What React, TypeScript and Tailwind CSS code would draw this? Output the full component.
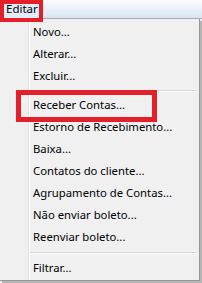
import React from "react";

const font = { fontFamily: '"Noto Sans", "Open Sans", "DejaVu Sans", sans-serif' };

function Item({ label }: { label: string }) {
  return (
    <div className="h-[22px] flex items-center pl-[33px] text-[11.3px] text-black leading-none">
      {label}
    </div>
  );
}

function Sep({ h }: { h: string }) {
  return (
    <div className={`${h} flex flex-col justify-center pl-[30px] pr-[3px]`}>
      <div className="h-px bg-[#d7d7d7]" />
      <div className="h-px bg-white" />
    </div>
  );
}

export default function App() {
  return (
    <div className="relative w-[202px] h-[283px] overflow-hidden bg-[#f0f0f0]" style={font}>
      {/* menu bar */}
      <div className="h-[19px] bg-gradient-to-b from-[#fbfcfe] to-[#dbe5f3] border-b border-[#a8acb2] flex items-end">
        <div className="h-[19px] px-[6px] flex items-center bg-[#e4ecf8] text-[11.5px] text-black leading-none">
          Editar
        </div>
      </div>

      {/* dropdown menu */}
      <div className="absolute left-0 top-[19px] w-[200px] h-[262px] bg-[#f0f0f0] border-r border-b border-[#979797] shadow-[2px_2px_1px_rgba(0,0,0,0.25)]">
        <div className="absolute left-[28px] top-0 bottom-0 w-px bg-[#e2e3e3]" />
        <div className="absolute left-[29px] top-0 bottom-0 w-px bg-white" />
        <div className="relative flex flex-col pt-[2px]">
          <Item label="Novo..." />
          <Item label="Alterar..." />
          <Item label="Excluir..." />
          <Sep h="h-[7px]" />
          <Item label="Receber Contas..." />
          <Item label="Estorno de Recebimento..." />
          <Item label="Baixa..." />
          <Item label="Contatos do cliente..." />
          <Item label="Agrupamento de Contas..." />
          <Item label="Não enviar boleto..." />
          <Item label="Reenviar boleto..." />
          <Sep h="h-[9px]" />
          <Item label="Filtrar..." />
        </div>
      </div>

      {/* annotation boxes */}
      <div className="absolute left-0 top-0 w-[43px] h-[22px] border-[4px] border-[#e3202a]" />
      <div className="absolute left-[16px] top-[90px] w-[141px] h-[32px] border-[5px] border-[#e3202a]" />
    </div>
  );
}
